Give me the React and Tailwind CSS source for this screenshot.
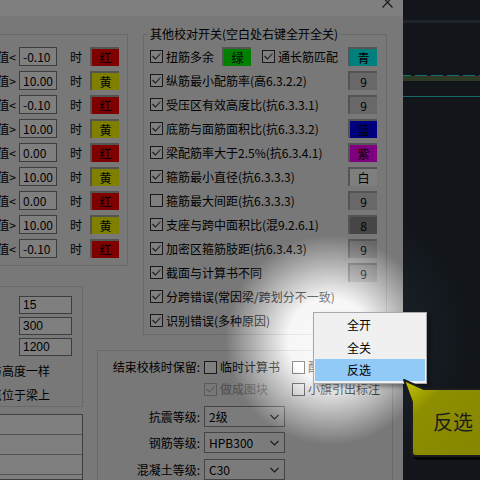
import React from 'react';

const leftRows = [
  ['<', '-0.10', 'r'],
  ['>', '10.00', 'y'],
  ['<', '-0.10', 'r'],
  ['>', '10.00', 'y'],
  ['<', '0.00', 'r'],
  ['>', '10.00', 'y'],
  ['<', '0.00', 'r'],
  ['>', '10.00', 'y'],
  ['<', '-0.10', 'r'],
];

const swatches = {
  r: ['红', 'bg-[#ff0000]'],
  y: ['黄', 'bg-[#ffff00]'],
  g: ['绿', 'bg-[#00ff00]'],
  c: ['青', 'bg-[#00ffff]'],
  b: ['蓝', 'bg-[#0000ff]'],
  m: ['紫', 'bg-[#ff00ff]'],
  w: ['白', 'bg-[#ffffff]'],
  n9: ['9', 'bg-[#d0d0d0]'],
  n8: ['8', 'bg-[#8c8c8c]'],
};

const checkRows = [
  ['纵筋最小配筋率(高6.3.2.2)', true, 'n9'],
  ['受压区有效高度比(抗6.3.3.1)', true, 'n9'],
  ['底筋与面筋面积比(抗6.3.3.2)', true, 'b'],
  ['梁配筋率大于2.5%(抗6.3.4.1)', true, 'm'],
  ['箍筋最小直径(抗6.3.3.3)', true, 'w'],
  ['箍筋最大间距(抗6.3.3.3)', false, 'n9'],
  ['支座与跨中面积比(混9.2.6.1)', true, 'n8'],
  ['加密区箍筋肢距(抗6.3.4.3)', true, 'n9'],
  ['截面与计算书不同', true, 'n9'],
  ['分跨错误(常因梁/跨划分不一致)', true, null],
  ['识别错误(多种原因)', true, null],
];

function Check({ on = true, disabled = false }) {
  const c = disabled ? '#b4b4b4' : '#333333';
  return (
    <span className={`w-[13px] h-[13px] shrink-0 border flex items-center justify-center ${disabled ? 'border-[#b4b4b4] bg-[#f0f0f0]' : 'border-[#333333] bg-white'}`}>
      {on && (
        <svg width="11" height="11" viewBox="0 0 11 11">
          <path d="M1.5 5 L4.5 8 L9.5 2.5" fill="none" stroke={c} strokeWidth="1.1" />
        </svg>
      )}
    </span>
  );
}

function Swatch({ k }) {
  const [label, cls] = swatches[k];
  return (
    <div className={`w-[29px] h-[19px] shrink-0 flex items-center justify-center border-t-2 border-l-2 border-[#a8a8a8] ${cls}`}>
      {label}
    </div>
  );
}

function Select({ value }) {
  return (
    <div className="w-[81px] h-[21px] border border-[#8a8a8a] bg-[#f6f6f6] flex items-center pl-[4px] pr-[5px]">
      <span>{value}</span>
      <svg className="ml-auto" width="9" height="6" viewBox="0 0 9 6">
        <path d="M0.5 1 L4.5 5 L8.5 1" fill="none" stroke="#333" strokeWidth="1.1" />
      </svg>
    </div>
  );
}

export default function App() {
  return (
    <div className="relative w-[480px] h-[480px] overflow-hidden flex text-[12px] leading-[14px] text-black font-['Noto_Sans_CJK_SC',sans-serif]">
      {/* dialog */}
      <div className="w-[403px] shrink-0 flex flex-col bg-[#f0f0f0]">
        <div className="h-[17px] bg-white flex justify-end items-start pr-[10px]">
          <svg width="11" height="8" viewBox="0 0 11 8">
            <path d="M0.5 -3 L10.5 7.5 M10.5 -3 L0.5 7.5" stroke="#222" strokeWidth="1.1" />
          </svg>
        </div>
        <div className="flex-1 flex">
          {/* column A */}
          <div className="w-[97px] shrink-0 flex flex-col">
            <div className="mt-[18px] w-[128px] h-[232px] shrink-0 border border-l-0 border-[#d0d0d0] pt-[12px] flex flex-col gap-[5px]">
              {leftRows.map(([sign, val, sw], i) => (
                <div key={i} className="flex items-center h-[19px]">
                  <div className="w-[16px] flex justify-end whitespace-nowrap">
                    <span className="shrink-0">值{sign}</span>
                  </div>
                  <div className="ml-[3px] w-[38px] h-[19px] border border-[#7a7a7a] bg-white flex items-center pl-[3px]">{val}</div>
                  <span className="ml-[13px]">时</span>
                  <div className="ml-[8px]">
                    <Swatch k={sw} />
                  </div>
                </div>
              ))}
            </div>
            <div className="mt-[20px] w-[83px] h-[121px] shrink-0 border border-l-0 border-[#d0d0d0] pt-[9px] pl-[19px] flex flex-col">
              {['15', '300', '1200'].map((v, i) => (
                <div key={i} className={`w-[53px] h-[18px] border border-[#7a7a7a] bg-white flex items-center pl-[3px] font-['Liberation_Sans',sans-serif] ${i ? 'mt-[3px]' : ''}`}>{v}</div>
              ))}
              <div className="-ml-[29px] mt-[8px] h-[14px] whitespace-nowrap">与高度一样</div>
              <div className="-ml-[29px] mt-[10px] h-[14px] whitespace-nowrap">点位于梁上</div>
            </div>
            <div className="mt-[7px] w-[83px] flex-1 border border-l-0 border-[#7c7c7c] bg-white flex flex-col">
              <div className="h-[20px] shrink-0 border-b border-[#a8a8a8]" />
              <div className="h-[20px] shrink-0 border-b border-[#a8a8a8]" />
              <div className="h-[20px] shrink-0 border-b border-[#a8a8a8]" />
            </div>
          </div>
          {/* column B */}
          <div className="flex-1 flex flex-col">
            <div className="relative ml-[46px] mt-[18px] w-[244px] h-[301px] shrink-0 border border-[#d0d0d0] pt-[12px] pl-[6px] pr-[9px] flex flex-col gap-[5px]">
              <span className="absolute -top-[8px] left-[4px] px-[2px] bg-[#f0f0f0] whitespace-nowrap">其他校对开关(空白处右键全开全关)</span>
              <div className="flex items-center h-[19px]">
                <Check />
                <span className="ml-[3px]">扭筋多余</span>
                <div className="ml-[8px]">
                  <Swatch k="g" />
                </div>
                <div className="ml-[11px]">
                  <Check />
                </div>
                <span className="ml-[3px]">通长筋匹配</span>
                <div className="ml-auto">
                  <Swatch k="c" />
                </div>
              </div>
              {checkRows.map(([t, on, sw], i) => (
                <div key={i} className="flex items-center h-[19px] whitespace-nowrap">
                  <Check on={on} />
                  <span className="ml-[3px]">{t}</span>
                  {sw && (
                    <div className="ml-auto">
                      <Swatch k={sw} />
                    </div>
                  )}
                </div>
              ))}
            </div>
            <div className="mt-[15px] w-[296px] flex-1 border border-b-0 border-[#d0d0d0] pt-[9px] flex flex-col">
              <div className="flex items-center h-[14px] whitespace-nowrap">
                <span className="w-[102px] text-right">结束校核时保留:</span>
                <div className="ml-[4px] w-[88px] flex items-center">
                  <Check on={false} />
                  <span className="ml-[3px]">临时计算书</span>
                </div>
                <Check on={false} />
                <span className="ml-[3px]">配筋简图</span>
              </div>
              <div className="mt-[8px] flex items-center h-[14px] whitespace-nowrap">
                <span className="w-[102px]" />
                <div className="ml-[4px] w-[88px] flex items-center">
                  <Check disabled />
                  <span className="ml-[3px] text-[#9c9c9c]">做成图块</span>
                </div>
                <Check on={false} />
                <span className="ml-[3px]">小旗引出标注</span>
              </div>
              {[
                ['抗震等级:', '2级', 'mt-[10px]'],
                ['钢筋等级:', 'HPB300', 'mt-[5px]'],
                ['混凝土等级:', 'C30', 'mt-[6px]'],
              ].map(([l, v, m]) => (
                <div key={l} className={`${m} flex items-center h-[21px] whitespace-nowrap`}>
                  <span className="w-[102px] text-right">{l}</span>
                  <div className="ml-[4px]">
                    <Select value={v} />
                  </div>
                </div>
              ))}
            </div>
          </div>
        </div>
      </div>

      {/* drawing canvas */}
      <div className="flex-1 bg-[#242c36] flex flex-col">
        <div className="mt-[20px] h-[3px] bg-[#3e4656]" />
        <svg className="mt-[52px] block" width="77" height="1">
          <line x1="-4" y1="0.5" x2="77" y2="0.5" stroke="#30d8d8" strokeDasharray="12 4" />
        </svg>
        <div className="h-[5px] bg-[#58744c]" />
        <div className="mt-[15px] h-[1px] bg-[#2ad0d0]" />
      </div>

      {/* dim overlay with spotlight: dialog part */}
      <div className="absolute left-0 top-0 bottom-0 w-[403px] z-10 pointer-events-none bg-[radial-gradient(circle_at_330px_340px,rgba(255,255,255,0.6)_0px,rgba(255,255,255,0.45)_42px,rgba(0,0,0,0.5)_105px)]" />
      {/* dim overlay: canvas part */}
      <div className="absolute left-[403px] top-0 bottom-0 right-0 z-10 pointer-events-none bg-[radial-gradient(circle_at_-73px_340px,rgba(0,0,0,0.2)_0px,rgba(0,0,0,0.25)_60px,rgba(0,0,0,0.5)_140px)]" />

      {/* context menu */}
      <div className="absolute z-20 left-[313px] top-[312px] w-[114px] h-[72px] border border-[#a8a8a8] bg-[#f0f0f0] p-[1px] shadow-[3px_3px_4px_rgba(0,0,0,0.35)] flex flex-col">
        <div className="h-[22px] flex items-center pl-[32px]">全开</div>
        <div className="h-[23px] flex items-center pl-[32px]">全关</div>
        <div className="h-[22px] flex items-center pl-[32px] bg-[#91c9f7]">反选</div>
      </div>

      {/* callout */}
      <svg className="absolute z-20 left-[400px] top-[376px]" width="80" height="92" viewBox="0 0 80 92">
        <defs>
          <linearGradient id="cg" x1="0" y1="0" x2="1" y2="1">
            <stop offset="0" stopColor="#c8c800" />
            <stop offset="0.3" stopColor="#8e8e00" />
            <stop offset="1" stopColor="#868600" />
          </linearGradient>
        </defs>
        <path d="M6 8 L26 17 L84 17 L84 84 L18 84 Q14 84 14 80 L14 30 Z" fill="#000" opacity="0.75" />
        <path d="M4 4 L24 13 L84 13 L84 80 L16 80 Q12 80 12 76 L12 26 Z" fill="url(#cg)" stroke="#1c1c1c" strokeWidth="2" strokeLinejoin="round" />
      </svg>
      <span className="absolute z-30 left-[433px] top-[408px] text-[20px] leading-[28px] text-[#1e1e1e]">反选</span>
    </div>
  );
}
